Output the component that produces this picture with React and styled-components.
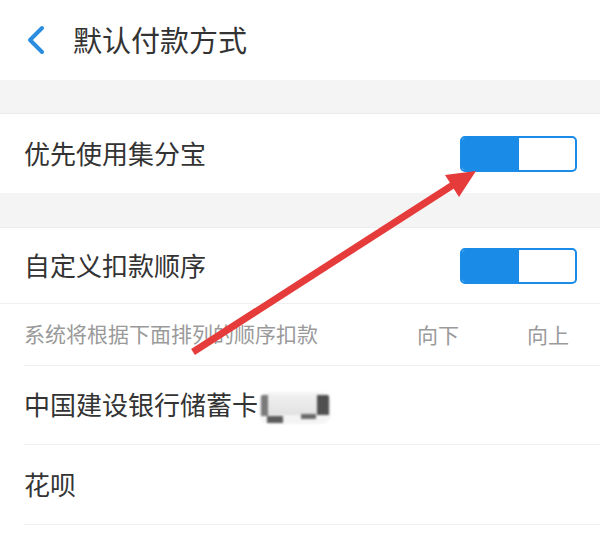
import React from 'react';
import styled, { createGlobalStyle } from 'styled-components';

const GlobalStyle = createGlobalStyle`
    html, body {
        margin: 0;
        padding: 0;
        background: #ffffff;
    }
    body {
        font-family: "Noto Sans CJK SC", "Noto Sans", sans-serif;
        color: #333333;
    }
`;

const Page = styled.div`
    position: relative;
    width: 600px;
    height: 551px;
    overflow: hidden;
    background: #ffffff;
`;

const Header = styled.header`
    height: 80px;
    display: flex;
    align-items: center;
    padding-left: 26px;
    box-sizing: border-box;
`;

const Title = styled.h1`
    margin: 0 0 0 27px;
    font-size: 29px;
    font-weight: 400;
    color: #333333;
    line-height: 1;
    padding-bottom: 2px;
`;

const Spacer = styled.div`
    height: ${p => p.$h}px;
    background: #f4f4f4;
    border-bottom: 1px solid #ececec;
    box-sizing: border-box;
`;

const Row = styled.div`
    height: ${p => p.$h}px;
    display: flex;
    align-items: center;
    box-sizing: border-box;
    padding: 0 23px 0 24px;
    font-size: 26px;
    color: #333333;
    ${p => p.$full && 'border-bottom: 1px solid #efefef;'}
`;

const InsetRow = styled.div`
    height: ${p => p.$h}px;
    margin-left: 24px;
    display: flex;
    align-items: center;
    box-sizing: border-box;
    border-bottom: 1px solid #efefef;
    font-size: ${p => (p.$hint ? 21 : 26)}px;
    color: ${p => (p.$hint ? '#9a9a9a' : '#333333')};
`;

const Label = styled.span`
    flex: 1;
    display: flex;
    align-items: center;
    line-height: 1;
    padding-bottom: 2px;
`;

const Action = styled.span`
    line-height: 1;
    margin-right: ${p => p.$mr}px;
`;

const Toggle = styled.div`
    width: 117px;
    height: 36px;
    display: flex;
    border-radius: 5px;
    overflow: hidden;
    border: 2px solid #1a8be6;
    box-sizing: border-box;
    background: #ffffff;
`;

const ToggleFill = styled.div`
    width: 57px;
    background: #1a8be6;
`;

const Masked = styled.span`
    display: inline-block;
    width: 72px;
    height: 32px;
    margin: 8px 0 0 1px;
    border-radius: 10px;
    filter: blur(0.8px);
    background:
        linear-gradient(#5c5c5c, #5c5c5c) 8px 24px / 16px 7px no-repeat,
        linear-gradient(#6a6a6a, #6a6a6a) 42px 22px / 15px 5px no-repeat,
        linear-gradient(#505050, #505050) 58px 3px / 12px 20px no-repeat,
        linear-gradient(#7a7a7a, #7a7a7a) 2px 3px / 7px 21px no-repeat,
        linear-gradient(#f0f0f0, #e2e2e2) 8px 3px / 52px 20px no-repeat,
        #f4f4f4;
`;

const Overlay = styled.svg`
    position: absolute;
    left: 0;
    top: 0;
    pointer-events: none;
`;

const BackIcon = () => (
    <svg width="20" height="30" viewBox="0 0 20 30">
        <path d="M16 3 L4 15 L16 27" fill="none" stroke="#2a8de0" strokeWidth="4" strokeLinecap="round" strokeLinejoin="round" />
    </svg>
);

const Switch = () => (
    <Toggle>
        <ToggleFill />
    </Toggle>
);

const App = () => {
    return (
        <Page>
            <GlobalStyle />
            <Header>
                <BackIcon />
                <Title>默认付款方式</Title>
            </Header>
            <Spacer $h={34} />
            <Row $h={79}>
                <Label>优先使用集分宝</Label>
                <Switch />
            </Row>
            <Spacer $h={35} />
            <Row $h={76} $full>
                <Label>自定义扣款顺序</Label>
                <Switch />
            </Row>
            <InsetRow $h={62} $hint>
                <Label>系统将根据下面排列的顺序扣款</Label>
                <Action $mr={68}>向下</Action>
                <Action $mr={31}>向上</Action>
            </InsetRow>
            <InsetRow $h={79}>
                <Label>中国建设银行储蓄卡<Masked /></Label>
            </InsetRow>
            <InsetRow $h={80}>
                <Label>花呗</Label>
            </InsetRow>
            <Overlay width="600" height="551" viewBox="0 0 600 551">
                <line x1="193" y1="352" x2="456" y2="183" stroke="#e63b3b" strokeWidth="7" strokeLinecap="butt" />
                <polygon points="476,171 445,175 459,197" fill="#e63b3b" />
            </Overlay>
        </Page>
    );
};

export default App;
